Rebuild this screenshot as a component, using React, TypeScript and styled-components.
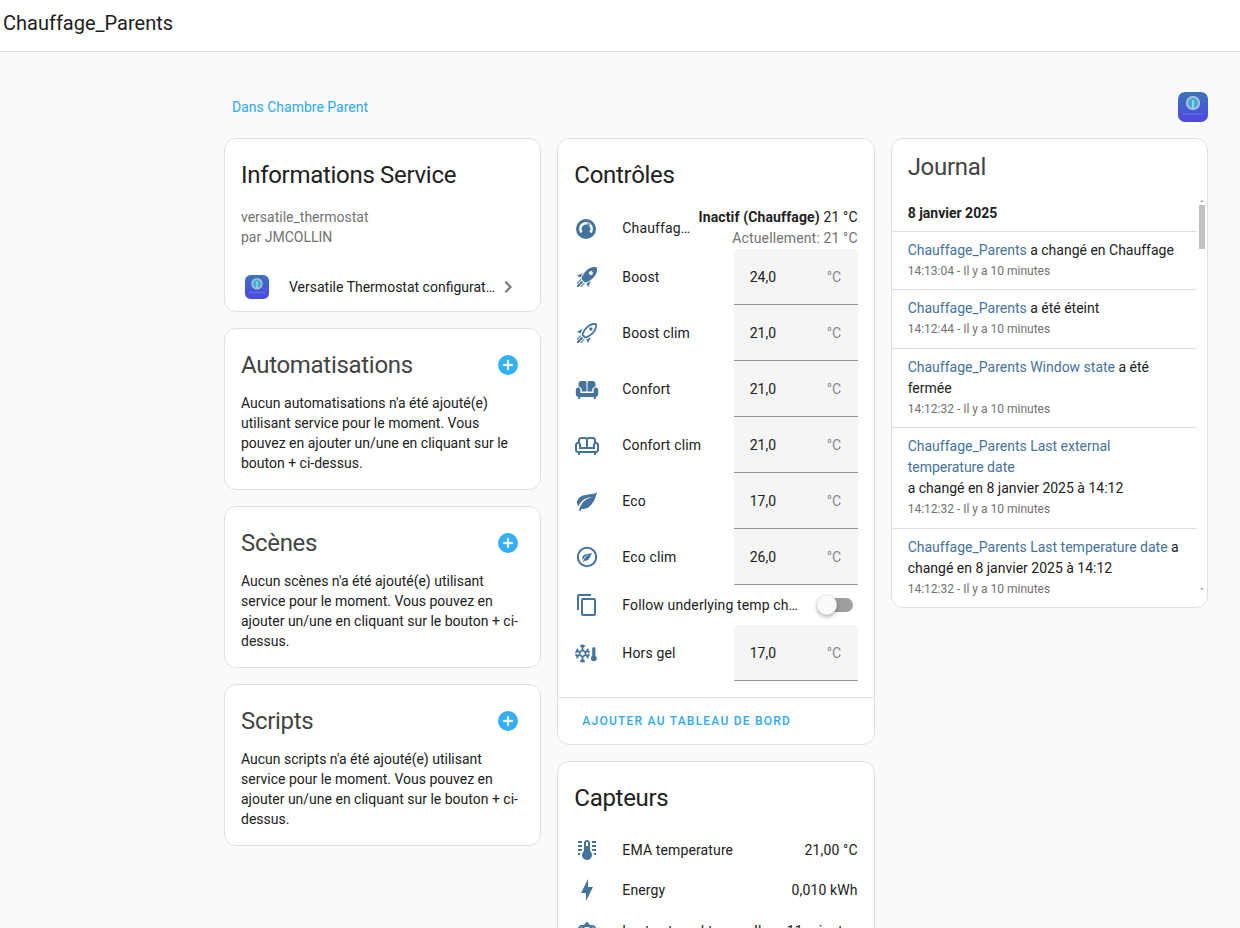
import React from "react";
import styled, { createGlobalStyle } from "styled-components";

const Global = createGlobalStyle`
  html, body { margin: 0; padding: 0; height: 928px; overflow: hidden; background: #fafafa; }
  body { font-family: Roboto, "Liberation Sans", sans-serif; font-size: 14px; color: #212121; }
  * { box-sizing: border-box; }
`;

const TopBar = styled.header`
  height: 52px; background: #fff; border-bottom: 1px solid #e0e0e0;
  padding: 0 3px 5px; display: flex; align-items: center;
`;
const TopTitle = styled.h1`
  margin: 0; font-size: 20px; font-weight: 400; line-height: 28px; color: #212121;
`;
const Page = styled.main`
  padding: 40px 32px 0 224px;
`;
const Crumbs = styled.div`
  display: flex; justify-content: space-between; align-items: center;
  padding-left: 8px; margin-bottom: 16px; height: 30px;
`;
const CrumbLink = styled.a`
  color: #2ea9f3; font-size: 14px; line-height: 20px;
`;
const Columns = styled.div`
  display: grid; grid-template-columns: repeat(3, 1fr); gap: 16px; align-items: start;
`;
const Column = styled.div`
  display: flex; flex-direction: column; gap: 16px; min-width: 0;
`;
const Card = styled.section`
  background: #fff; border: 1px solid #e0e0e0; border-radius: 12px; position: relative; overflow: hidden;
`;
const CardHeader = styled.div<{ $top?: number; $bottom?: number }>`
  display: flex; justify-content: space-between; align-items: center;
  padding: ${(p) => p.$top ?? 20}px 22px ${(p) => p.$bottom ?? 16}px 16px;
`;
const CardTitle = styled.h2<{ $muted?: boolean }>`
  margin: 0; font-size: 24px; font-weight: 400; line-height: 32px; letter-spacing: -0.3px;
  color: ${(p) => (p.$muted ? "#444" : "#212121")};
`;
const Description = styled.div`
  padding: 0 16px 16px; color: #727272; line-height: 20px;
`;
const LinkItem = styled.a`
  display: flex; align-items: center; height: 48px; padding: 0 20px 0 20px; color: #212121;
`;
const LinkText = styled.span`
  flex: 1; min-width: 0; margin-left: 20px; white-space: nowrap; overflow: hidden; text-overflow: ellipsis;
`;
const EmptyText = styled.p`
  margin: -4px 0 0; padding: 0 16px 16px; line-height: 20px; color: #212121;
`;
const Rows = styled.div<{ $bottom: number }>`
  padding: 0 16px ${(p) => p.$bottom}px; letter-spacing: 0.13px;
`;
const Row = styled.div<{ $h: number }>`
  display: flex; align-items: center; height: ${(p) => p.$h}px;
`;
const IconCell = styled.span`
  flex: 0 0 48px; display: flex; align-items: center; padding-left: 1px;
`;
const RowLabel = styled.span`
  flex: 1; min-width: 0; white-space: nowrap; overflow: hidden; text-overflow: ellipsis; line-height: 20px;
`;
const RowValue = styled.span`
  flex: none; margin-left: 12px; white-space: nowrap; line-height: 20px;
`;
const Climate = styled.div`
  flex: none; margin-left: 8px; text-align: right; line-height: 21px; white-space: nowrap;
`;
const ClimateNow = styled.div`
  color: #727272;
`;
const Strong = styled.b`
  font-weight: 700;
`;
const Field = styled.div`
  flex: none; width: 124px; height: 56px; background: #f5f5f5; border-bottom: 1px solid #949494;
  border-radius: 4px 4px 0 0; padding: 0 16.6px 0 16px; display: flex; justify-content: space-between; align-items: center;
  letter-spacing: 0;
`;
const Unit = styled.span`
  color: #8a8a8a;
`;
const SwitchTrack = styled.span`
  flex: none; position: relative; width: 34px; height: 14px; border-radius: 7px; background: #9e9e9e;
  margin: 0 5px 0 18px;
`;
const SwitchThumb = styled.span`
  position: absolute; left: -2px; top: -3px; width: 20px; height: 20px; border-radius: 50%; background: #fafafa;
  box-shadow: 0 2px 4px rgba(0,0,0,.3), 0 0 1px rgba(0,0,0,.2);
`;
const Actions = styled.div`
  border-top: 1px solid #e0e0e0; padding: 5px 8px;
`;
const ActionButton = styled.button`
  display: block; height: 36px; padding: 0 16px; background: none; border: 0;
  font: 500 12px/36px Roboto, sans-serif; letter-spacing: 1.23px; text-transform: uppercase; color: #2ea9f3;
`;
const Plus = styled.span`
  flex: none; width: 20px; height: 20px; border-radius: 50%; background: #34aef4; display: flex; align-items: center; justify-content: center;
`;
const LogList = styled.div`
  position: relative; height: 410px; overflow: hidden; padding-right: 10px;
`;
const LogDate = styled.div`
  height: 34.75px; padding: 6px 16px 0; font-weight: 700; line-height: 20px; border-bottom: 1px solid #e0e0e0;
`;
const LogEntry = styled.div<{ $last?: boolean }>`
  padding: 8px 16px; border-bottom: ${(p) => (p.$last ? "0" : "1px solid #e0e0e0")}; line-height: 21px;
`;
const LogLink = styled.a`
  color: #44739e;
`;
const LogTime = styled.div`
  color: #727272; font-size: 12px; line-height: 20.5px;
`;
const ScrollTrack = styled.div`
  position: absolute; top: 0; bottom: 0; right: 2px; width: 6px;
`;
const ScrollThumb = styled.div`
  position: absolute; top: 8px; left: 0; width: 6px; height: 44px; background: #c1c1c1;
`;
const ScrollArrow = styled.span<{ $down?: boolean }>`
  position: absolute; left: 1px; width: 0; height: 0;
  border-left: 2px solid transparent; border-right: 2px solid transparent;
  ${(p) => (p.$down
    ? "bottom: 17px; border-top: 2px solid #a3a3a3;"
    : "top: 3px; border-bottom: 2px solid #a3a3a3;")}
`;
const IconSvg = styled.svg`
  display: block; width: 24px; height: 24px; fill: #44739e; flex: none;
`;
const ChevronSvg = styled.svg`
  display: block; width: 24px; height: 24px; fill: #727272; flex: none;
`;
const PlusSvg = styled.svg`
  display: block; width: 16px; height: 16px; fill: #fff;
`;
const LogoSvg = styled.svg<{ $size: number }>`
  display: block; flex: none; width: ${(p) => p.$size}px; height: ${(p) => p.$size}px;
`;

const Logo = ({ size }: { size: number }) => (
  <LogoSvg $size={size} viewBox="0 0 30 30">
    <defs>
      <linearGradient id="logoBg" x1="0" y1="0" x2="0" y2="1">
        <stop offset="0" stopColor="#3c73b8" />
        <stop offset="1" stopColor="#4f46e6" />
      </linearGradient>
      <radialGradient id="logoBall">
        <stop offset="0" stopColor="#25c5ea" />
        <stop offset="0.55" stopColor="#4f9fc4" />
        <stop offset="1" stopColor="#c9d6e2" />
      </radialGradient>
    </defs>
    <rect width="30" height="30" rx="7" fill="url(#logoBg)" />
    <circle cx="15" cy="11" r="7" fill="url(#logoBall)" />
    <rect x="14.3" y="8" width="1.4" height="8" fill="#dff6ff" opacity=".7" />
    <rect x="5" y="21.5" width="20" height="1.2" fill="#8fa0ef" opacity=".4" />
  </LogoSvg>
);

const P: Record<string, React.ReactNode> = {
  thermostat: (
    <>
      <circle cx="11" cy="13" r="10" />
      <path d="M6.6 16.4A5.6 5.6 0 1 1 15.4 16.4" fill="none" stroke="#fff" strokeWidth="2.6" />
      <path d="M12.6 6.4L15 8.8L12.2 10.6Z" fill="#44739e" />
    </>
  ),
  rocket: <path d="M13.13 22.19L11.5 18.36C13.07 17.78 14.54 17 15.9 16.09L13.13 22.19M5.64 12.5L1.81 10.87L7.91 8.1C7 9.46 6.22 10.93 5.64 12.5M21.61 2.39C21.61 2.39 16.66 .269 11 5.93C8.81 8.12 7.5 10.53 6.65 12.64C6.37 13.39 6.56 14.21 7.11 14.77L9.24 16.89C9.79 17.45 10.61 17.63 11.36 17.35C13.5 16.53 15.88 15.19 18.07 13C23.73 7.34 21.61 2.39 21.61 2.39M14.54 9.46C13.76 8.68 13.76 7.41 14.54 6.63S16.59 5.85 17.37 6.63C18.14 7.41 18.15 8.68 17.37 9.46C16.59 10.24 15.32 10.24 14.54 9.46M6.24 22L9.88 18.36C9.54 18.27 9.21 18.12 8.91 17.91L4.83 22H6.24M2 22H3.41L8.18 17.24L6.76 15.83L2 20.59V22M2 19.17L6.09 15.09C5.88 14.79 5.73 14.47 5.64 14.12L2 17.76V19.17Z" />,
  rocketOutline: (
    <>
      <path d="M13.13 22.19L11.5 18.36C13.07 17.78 14.54 17 15.9 16.09L13.13 22.19M5.64 12.5L1.81 10.87L7.91 8.1C7 9.46 6.22 10.93 5.64 12.5M6.24 22L9.88 18.36C9.54 18.27 9.21 18.12 8.91 17.91L4.83 22H6.24M2 22H3.41L8.18 17.24L6.76 15.83L2 20.59V22M2 19.17L6.09 15.09C5.88 14.79 5.73 14.47 5.64 14.12L2 17.76V19.17Z" />
      <path d="M20.9 3.1C20.9 3.1 16.6 1.7 11.7 6.6C9.7 8.6 8.5 10.7 7.7 12.8C7.5 13.4 7.6 13.9 8 14.3L9.7 16C10.1 16.4 10.6 16.5 11.2 16.3C13.3 15.5 15.4 14.3 17.4 12.3C22.3 7.4 20.9 3.1 20.9 3.1Z" fill="none" stroke="#44739e" strokeWidth="1.8" />
      <circle cx="15.9" cy="8" r="1.7" />
    </>
  ),
  sofa: (
    <path d="M3.5 9.4V6.8C3.5 5.3 4.7 4 6.2 4H10C10.9 4 11.5 4.7 11.5 5.5V14.5H6.8V12.8C6.8 11.2 5.4 9.6 3.5 9.4ZM20.5 9.4V6.8C20.5 5.3 19.3 4 17.8 4H14C13.1 4 12.5 4.7 12.5 5.5V14.5H17.2V12.8C17.2 11.2 18.6 9.6 20.5 9.4ZM3.2 10.5C4.4 10.5 5.4 11.5 5.4 12.7V16H18.6V12.7C18.6 11.5 19.6 10.5 20.8 10.5C22.2 10.5 23.2 11.6 23.2 13V17C23.2 18.6 22.2 19.6 20.8 19.9V22H18.8V20H5.2V22H3.2V19.9C1.8 19.6 .8 18.6 .8 17V13C.8 11.6 1.8 10.5 3.2 10.5Z" />
  ),
  sofaOutline: <path d="M21 9V7C21 5.35 19.65 4 18 4H14C13.23 4 12.53 4.3 12 4.78C11.47 4.3 10.77 4 10 4H6C4.35 4 3 5.35 3 7V9C1.35 9 0 10.35 0 12V17C0 18.65 1.35 20 3 20V22H5V20H19V22H21V20C22.65 20 24 18.65 24 17V12C24 10.35 22.65 9 21 9M14 6H18C18.55 6 19 6.45 19 7V9.78C18.39 10.33 18 11.12 18 12V14H13V7C13 6.45 13.45 6 14 6M5 7C5 6.45 5.45 6 6 6H10C10.55 6 11 6.45 11 7V14H6V12C6 11.12 5.61 10.33 5 9.78V7M22 17C22 17.55 21.55 18 21 18H3C2.45 18 2 17.55 2 17V12C2 11.45 2.45 11 3 11S4 11.45 4 12V16H20V12C20 11.45 20.45 11 21 11S22 11.45 22 12V17Z" />,
  leaf: <path d="M17,8C8,10 5.9,16.17 3.82,21.34L5.71,22L6.66,19.7C7.14,19.87 7.64,20 8,20C19,20 22,3 22,3C21,5 14,5.25 9,6.25C4,7.25 2,11.5 2,13.5C2,15.5 3.75,17.25 3.75,17.25C7,8 17,8 17,8Z" />,
  leafCircle: (
    <>
      <circle cx="12" cy="12" r="9.2" fill="none" stroke="#44739e" strokeWidth="2" />
      <path transform="translate(6.2 6.4) scale(.48)" d="M17,8C8,10 5.9,16.17 3.82,21.34L5.71,22L6.66,19.7C7.14,19.87 7.64,20 8,20C19,20 22,3 22,3C21,5 14,5.25 9,6.25C4,7.25 2,11.5 2,13.5C2,15.5 3.75,17.25 3.75,17.25C7,8 17,8 17,8Z" />
    </>
  ),
  copy: <path d="M19,21H8V7H19M19,5H8A2,2 0 0,0 6,7V21A2,2 0 0,0 8,23H19A2,2 0 0,0 21,21V7A2,2 0 0,0 19,5M16,1H4A2,2 0 0,0 2,3V17H4V3H16V1Z" />,
  snow: (
    <>
      <g fill="none" stroke="#44739e" strokeWidth="1.8">
        <path d="M7.5 9.2L10.4 10.9V14.1L7.5 15.8L4.6 14.1V10.9Z" />
        <path d="M7.5 9.2V3.6M5.3 4.4L7.5 6.4L9.7 4.4M7.5 15.8V21.4M5.3 20.6L7.5 18.6L9.7 20.6M10.4 10.9L13.6 9M4.6 14.1L1.4 16M4.6 10.9L1.4 9M10.4 14.1L13.6 16M.4 11.6L2.6 10.2L2.2 7.6M14.6 11.6L12.4 10.2L12.8 7.6M.4 13.4L2.6 14.8L2.2 17.4M14.6 13.4L12.4 14.8L12.8 17.4" />
      </g>
      <path d="M17.2 14.8V7.5A1.6 1.6 0 0 1 20.4 7.5V14.8A3 3 0 1 1 17.2 14.8Z" />
    </>
  ),
  thermoLines: <path d="M17 3H21V5H17V3M17 7H21V9H17V7M17 11H21V13H17.75L17 12.1V11M21 15V17H19C19 16.31 18.89 15.63 18.66 15H21M7 3V5H3V3H7M7 7V9H3V7H7M7 11V12.1L6.25 13H3V11H7M3 15H5.34C5.11 15.63 5 16.31 5 17H3V15M15 13V5C15 3.34 13.66 2 12 2S9 3.34 9 5V13C6.79 14.66 6.34 17.79 8 20S12.79 22.66 15 21 17.66 16.21 16 14C15.72 13.62 15.38 13.28 15 13M12 4C12.55 4 13 4.45 13 5V8H11V5C11 4.45 11.45 4 12 4Z" />,
  bolt: <path d="M11 15H6L13 1V9H18L11 23V15Z" />,
  clockHouse: (
    <>
      <path d="M12 2.5L15 6H9Z" />
      <path d="M3.5 9L6 6.8H18L20.5 9" fill="none" stroke="#44739e" strokeWidth="1.8" />
      <circle cx="12" cy="14" r="7" fill="none" stroke="#44739e" strokeWidth="2" />
    </>
  ),
};

const Icon = ({ name }: { name: string }) => <IconSvg viewBox="0 0 24 24">{P[name]}</IconSvg>;

const Number_ = ({ icon, label, value }: { icon: string; label: string; value: string }) => (
  <Row $h={56}>
    <IconCell><Icon name={icon} /></IconCell>
    <RowLabel>{label}</RowLabel>
    <Field><span>{value}</span><Unit>°C</Unit></Field>
  </Row>
);

const Sensor = ({ icon, label, value }: { icon: string; label: string; value: string }) => (
  <Row $h={40.25}>
    <IconCell><Icon name={icon} /></IconCell>
    <RowLabel>{label}</RowLabel>
    <RowValue>{value}</RowValue>
  </Row>
);

const Empty = ({ title, text }: { title: string; text: string }) => (
  <Card>
    <CardHeader>
      <CardTitle $muted>{title}</CardTitle>
      <Plus>
        <PlusSvg viewBox="0 0 24 24"><path d="M19,13H13V19H11V13H5V11H11V5H13V11H19V13Z" stroke="#fff" strokeWidth="1" /></PlusSvg>
      </Plus>
    </CardHeader>
    <EmptyText>{text}</EmptyText>
  </Card>
);

export default function App() {
  return (
    <>
      <Global />
      <TopBar><TopTitle>Chauffage_Parents</TopTitle></TopBar>
      <Page>
        <Crumbs>
          <CrumbLink>Dans Chambre Parent</CrumbLink>
          <Logo size={30} />
        </Crumbs>
        <Columns>
          <Column>
            <Card>
              <CardHeader><CardTitle>Informations Service</CardTitle></CardHeader>
              <Description>versatile_thermostat<br />par JMCOLLIN</Description>
              <LinkItem>
                <Logo size={24} />
                <LinkText>Versatile Thermostat configuration</LinkText>
                <ChevronSvg viewBox="0 0 24 24"><path d="M8.59,16.58L13.17,12L8.59,7.41L10,6L16,12L10,18L8.59,16.58Z" /></ChevronSvg>
              </LinkItem>
            </Card>
            <Empty title="Automatisations" text="Aucun automatisations n'a été ajouté(e) utilisant service pour le moment. Vous pouvez en ajouter un/une en cliquant sur le bouton + ci-dessus." />
            <Empty title="Scènes" text="Aucun scènes n'a été ajouté(e) utilisant service pour le moment. Vous pouvez en ajouter un/une en cliquant sur le bouton + ci-dessus." />
            <Empty title="Scripts" text="Aucun scripts n'a été ajouté(e) utilisant service pour le moment. Vous pouvez en ajouter un/une en cliquant sur le bouton + ci-dessus." />
          </Column>
          <Column>
            <Card>
              <CardHeader><CardTitle>Contrôles</CardTitle></CardHeader>
              <Rows $bottom={16}>
                <Row $h={42}>
                  <IconCell><Icon name="thermostat" /></IconCell>
                  <RowLabel>Chauffage_Parents</RowLabel>
                  <Climate>
                    <div><Strong>Inactif (Chauffage)</Strong> 21 °C</div>
                    <ClimateNow>Actuellement: 21 °C</ClimateNow>
                  </Climate>
                </Row>
                <Number_ icon="rocket" label="Boost" value="24,0" />
                <Number_ icon="rocketOutline" label="Boost clim" value="21,0" />
                <Number_ icon="sofa" label="Confort" value="21,0" />
                <Number_ icon="sofaOutline" label="Confort clim" value="21,0" />
                <Number_ icon="leaf" label="Eco" value="17,0" />
                <Number_ icon="leafCircle" label="Eco clim" value="26,0" />
                <Row $h={40}>
                  <IconCell><Icon name="copy" /></IconCell>
                  <RowLabel>Follow underlying temp change</RowLabel>
                  <SwitchTrack><SwitchThumb /></SwitchTrack>
                </Row>
                <Number_ icon="snow" label="Hors gel" value="17,0" />
              </Rows>
              <Actions><ActionButton>Ajouter au tableau de bord</ActionButton></Actions>
            </Card>
            <Card>
              <CardHeader><CardTitle>Capteurs</CardTitle></CardHeader>
              <Rows $bottom={16}>
                <Sensor icon="thermoLines" label="EMA temperature" value="21,00 °C" />
                <Sensor icon="bolt" label="Energy" value="0,010 kWh" />
                <Sensor icon="clockHouse" label="Last external temperature date" value="Il y a 11 minutes" />
              </Rows>
            </Card>
          </Column>
          <Column>
            <Card>
              <CardHeader $top={12} $bottom={14}><CardTitle $muted>Journal</CardTitle></CardHeader>
              <LogList>
                <LogDate>8 janvier 2025</LogDate>
                <LogEntry>
                  <LogLink>Chauffage_Parents</LogLink> a changé en Chauffage
                  <LogTime>14:13:04 - Il y a 10 minutes</LogTime>
                </LogEntry>
                <LogEntry>
                  <LogLink>Chauffage_Parents</LogLink> a été éteint
                  <LogTime>14:12:44 - Il y a 10 minutes</LogTime>
                </LogEntry>
                <LogEntry>
                  <LogLink>Chauffage_Parents Window state</LogLink> a été fermée
                  <LogTime>14:12:32 - Il y a 10 minutes</LogTime>
                </LogEntry>
                <LogEntry>
                  <LogLink>Chauffage_Parents Last external temperature date</LogLink><br />a changé en 8 janvier 2025 à 14:12
                  <LogTime>14:12:32 - Il y a 10 minutes</LogTime>
                </LogEntry>
                <LogEntry $last>
                  <LogLink>Chauffage_Parents Last temperature date</LogLink> a changé en 8 janvier 2025 à 14:12
                  <LogTime>14:12:32 - Il y a 10 minutes</LogTime>
                </LogEntry>
                <ScrollTrack>
                  <ScrollArrow />
                  <ScrollThumb />
                  <ScrollArrow $down />
                </ScrollTrack>
              </LogList>
            </Card>
          </Column>
        </Columns>
      </Page>
    </>
  );
}
